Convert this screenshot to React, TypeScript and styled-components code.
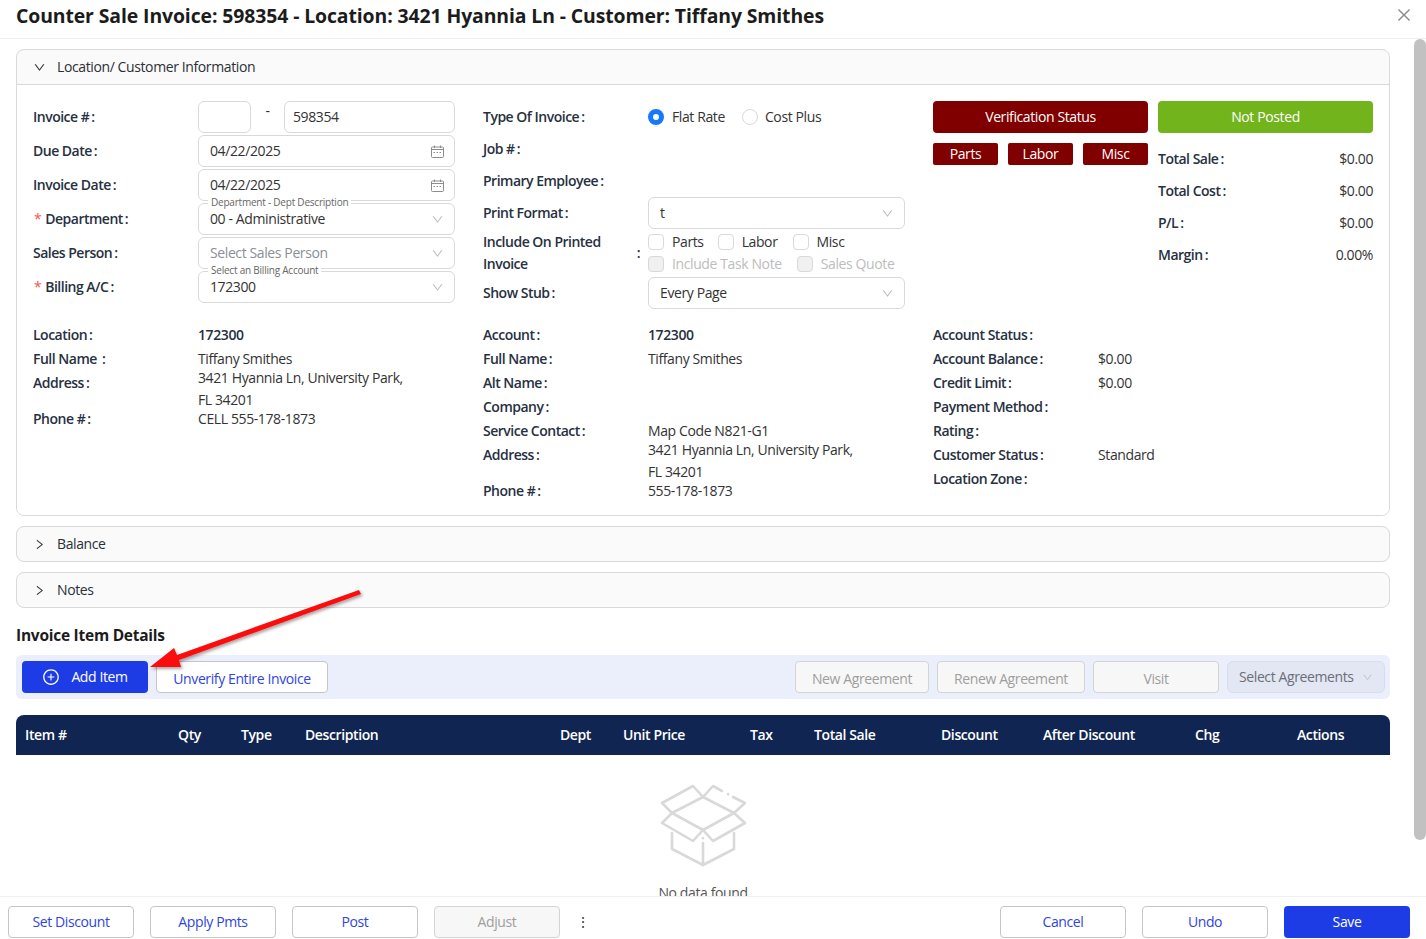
import React from "react";
import styled, { createGlobalStyle } from "styled-components";
import { AiOutlineDown, AiOutlineRight, AiOutlineClose, AiOutlinePlusCircle } from "react-icons/ai";

const Global = createGlobalStyle`
  html, body { margin: 0; padding: 0; height: 100%; overflow: hidden; background: #fff; }
  * { box-sizing: border-box; }
  body { font-family: "Open Sans", "Noto Sans", sans-serif; font-size: 14px; line-height: 22px; color: #2b2f36; }
`;

const Page = styled.div`
  position: relative; width: 1426px; height: 939px; display: flex; flex-direction: column; overflow: hidden; background: #fff;
  letter-spacing: -0.39px;
`;
const Header = styled.header`
  height: 39px; flex: none; border-bottom: 1px solid #f0f0f0; display: flex; align-items: flex-start; justify-content: space-between; padding: 3px 13px 0 16px;
`;
const Title = styled.h1`
  margin: 0; font-size: 19.4px; line-height: 26px; font-weight: 700; color: #1c1c1c; letter-spacing: -0.1px;
`;
const CloseBtn = styled.span`
  color: #8c8c8c; font-size: 18px; line-height: 0; margin-top: 3px;
`;
const Body = styled.main`
  position: relative; flex: 1; min-height: 0; overflow: hidden;
`;
const ScrollThumb = styled.div`
  position: absolute; top: 0; right: 0; width: 12px; height: 801px; border-radius: 6px; background: #c1c1c1;
`;
const Content = styled.div`
  height: 917px; padding: 10px 36px 0 16px; overflow: hidden;
`;
const Card = styled.section`
  border: 1px solid #d9d9d9; border-radius: 8px; background: #fafafa; margin-bottom: 10px; overflow: hidden;
`;
const CardHead = styled.div`
  height: 34px; display: flex; align-items: center; padding-left: 16px; gap: 11px; color: #2b2f36;
  svg { font-size: 13px; color: #333; flex: none; }
`;
const OpenRule = styled.div`
  border-top: 1px solid #d9d9d9;
`;
const CardBody = styled.div`
  background: #fff; padding: 16px 16px 12px;
`;
const TopGrid = styled.div`
  display: grid; grid-template-columns: 422px 422px 440px; column-gap: 28px; margin-bottom: 14px;
`;
const FormCol = styled.div<{ $gap?: number }>`
  display: flex; flex-direction: column; gap: ${(p) => p.$gap ?? 2}px;
`;
const FormRow = styled.div<{ $h?: number; $mt?: number }>`
  display: grid; grid-template-columns: 165px 257px; align-items: center; height: ${(p) => p.$h ?? 32}px; margin-top: ${(p) => p.$mt ?? 0}px;
`;
const Label = styled.span`
  font-weight: 600; color: #27303f; white-space: nowrap; letter-spacing: -0.5px;
  &::after { content: ":"; margin-left: 2px; }
`;
const Star = styled.span`
  color: #ff4d4f; font-weight: 400; margin-right: 4px; margin-left: 1px;
`;
const IncludeLabel = styled.div`
  display: flex; align-items: center; justify-content: space-between; padding-right: 8px; font-weight: 600; color: #27303f; letter-spacing: -0.5px;
`;
const InvoiceInputs = styled.div`
  display: flex; align-items: flex-start;
`;
const Dash = styled.span`
  width: 33px; text-align: center; margin-top: -1px;
`;
const Box = styled.div<{ $w?: number; $pad?: number; $muted?: boolean }>`
  position: relative; height: 32px; ${(p) => (p.$w ? `width: ${p.$w}px;` : "width: 100%;")} border: 1px solid #d9d9d9; border-radius: 6px; background: #fff;
  display: flex; align-items: center; justify-content: space-between; padding: 0 10px 0 ${(p) => p.$pad ?? 11}px;
  color: ${(p) => (p.$muted ? "#8a8f98" : "#333")};
  > svg { flex: none; color: #bfbfbf; font-size: 13px; }
`;
const Legend = styled.span`
  position: absolute; left: 9px; top: -8px; background: #fff; padding: 0 3px; font-size: 10px; line-height: 13px; color: #666; white-space: nowrap; letter-spacing: -0.22px;
`;
const Options = styled.div`
  display: flex; align-items: center; height: 22px;
`;
const OptionStack = styled.div`
  display: flex; flex-direction: column;
`;
const Option = styled.span<{ $off?: boolean; $gap?: number }>`
  display: inline-flex; align-items: center; gap: 8px; margin-right: ${(p) => p.$gap ?? 16}px; color: ${(p) => (p.$off ? "#bdbdbd" : "#333")}; white-space: nowrap;
`;
const Radio = styled.i<{ $on?: boolean }>`
  width: 16px; height: 16px; border-radius: 50%; display: block; flex: none; margin-right: ${(p) => (p.$on ? 0 : -1)}px;
  ${(p) => (p.$on ? "border: 5px solid #1677ff; background: #fff;" : "border: 1px solid #d9d9d9; background: #fff;")}
`;
const Check = styled.i<{ $off?: boolean }>`
  width: 16px; height: 16px; border-radius: 4px; display: block; flex: none; border: 1px solid #d9d9d9; background: ${(p) => (p.$off ? "#f0f0f0" : "#fff")};
`;
const StatusGrid = styled.div`
  display: grid; grid-template-columns: 215px 215px; column-gap: 10px; align-content: start;
`;
const StatusBtn = styled.div<{ $bg: string }>`
  height: 32px; border-radius: 4px; background: ${(p) => p.$bg}; color: #fff; display: flex; align-items: center; justify-content: center;
`;
const MiniRow = styled.div`
  display: flex; gap: 10px; margin-top: 10px;
`;
const Mini = styled.div`
  width: 65px; height: 22px; border-radius: 2px; background: #800000; color: #fff; display: flex; align-items: center; justify-content: center;
`;
const Totals = styled.div`
  margin-top: 10px;
`;
const TotalRow = styled.div`
  height: 32px; display: flex; align-items: center; justify-content: space-between; color: #333;
`;
const InfoGrid = styled.div`
  display: grid; grid-template-columns: 422px 422px 440px; column-gap: 28px;
`;
const InfoRow = styled.div<{ $tall?: boolean }>`
  display: grid; grid-template-columns: 165px 257px; height: ${(p) => (p.$tall ? 36 : 24)}px; line-height: 24px; color: #333;
`;
const InfoValue = styled.span<{ $bold?: boolean }>`
  font-weight: ${(p) => (p.$bold ? 600 : 400)}; color: ${(p) => (p.$bold ? "#27303f" : "#333")};
`;
const MultiValue = styled.span`
  line-height: 22px; margin-top: -4px; display: block;
`;
const SectionTitle = styled.h2`
  margin: 17px 0 10px; font-size: 15.5px; line-height: 20px; font-weight: 700; color: #1c1c1c; letter-spacing: -0.25px;
`;
const Toolbar = styled.div`
  height: 44px; border-radius: 6px; background: #ebeefb; display: flex; align-items: center; padding: 0 5px 0 6px; margin-bottom: 16px;
`;
const PrimaryBtn = styled.button<{ $w: number }>`
  width: ${(p) => p.$w}px; height: 32px; border: 0; border-radius: 4px; background: #1d3ce6; color: #fff; font: inherit; letter-spacing: inherit; padding: 0; flex: none;
  display: inline-flex; align-items: center; justify-content: center; gap: 11px;
  svg { font-size: 18px; }
`;
const OutlineBtn = styled.button<{ $w: number; $off?: boolean }>`
  width: ${(p) => p.$w}px; height: 32px; border: 1px solid ${(p) => (p.$off ? "#d4d4d4" : "#c6c6c6")}; border-radius: 4px; flex: none; padding: 0;
  background: ${(p) => (p.$off ? "#f7f7f7" : "#fff")}; color: ${(p) => (p.$off ? "#9e9e9e" : "#2f45e0")}; font: inherit; letter-spacing: inherit; line-height: 30px;
`;
const ToolBtn = styled(OutlineBtn)`
  padding-top: 2px;
`;
const ToolLeft = styled.div`
  display: flex; gap: 8px;
`;
const ToolRight = styled.div`
  display: flex; gap: 8px; margin-left: auto;
`;
const AgreementSelect = styled.div`
  width: 158px; height: 32px; border: 1px solid #d9dcec; border-radius: 6px; background: #e3e6f3; color: #6b6f78; display: flex; align-items: center; justify-content: space-between; padding: 0 11px;
  svg { font-size: 11px; color: #bfc3d2; flex: none; }
`;
const TableHead = styled.div`
  height: 40px; border-radius: 8px 8px 0 0; background: #102552; color: #fff; font-weight: 600; display: grid; align-items: center; padding-left: 9px;
  grid-template-columns: 153px 63px 64px 255px 63px 127px 64px 127px 102px 152px 102px 1fr;
`;
const Empty = styled.div`
  display: flex; flex-direction: column; align-items: center; padding-top: 25px; color: #555; line-height: 20px;
  svg { display: block; margin-bottom: 13px; }
`;
const Footer = styled.footer`
  height: 43px; flex: none; background: #fff; border-top: 1px solid #f0f0f0; display: flex; align-items: flex-start; padding: 9px 16px 0 8px; gap: 16px;
`;
const Dots = styled.span`
  width: 14px; text-align: center; line-height: 32px; color: #333;
`;
const Spacer = styled.div`
  flex: 1;
`;
const ArrowLayer = styled.svg`
  position: absolute; left: 140px; top: 580px; pointer-events: none; overflow: visible;
`;

const Calendar = () => (
  <svg width="13" height="13" viewBox="0 0 13 13" fill="none" stroke="#8c8c8c" strokeWidth="1">
    <rect x="0.5" y="2" width="12" height="10.5" rx="1" />
    <path d="M3.5 0.5V3M9.5 0.5V3M0.5 4.5H12.5" />
    <path d="M2.5 7.5H4.5M5.5 7.5H7.5M8.5 7.5H10.5" strokeDasharray="1.5 0.5" />
  </svg>
);

type Info = [string, React.ReactNode, boolean?];

const infoA: Info[] = [
  ["Location", <InfoValue $bold>172300</InfoValue>],
  ["Full Name ", <InfoValue>Tiffany Smithes</InfoValue>],
  ["Address", <MultiValue>3421 Hyannia Ln, University Park,<br />FL 34201</MultiValue>, true],
  ["Phone #", <InfoValue>CELL 555-178-1873</InfoValue>],
];
const infoB: Info[] = [
  ["Account", <InfoValue $bold>172300</InfoValue>],
  ["Full Name", <InfoValue>Tiffany Smithes</InfoValue>],
  ["Alt Name", null],
  ["Company", null],
  ["Service Contact", <InfoValue>Map Code N821-G1</InfoValue>],
  ["Address", <MultiValue>3421 Hyannia Ln, University Park,<br />FL 34201</MultiValue>, true],
  ["Phone #", <InfoValue>555-178-1873</InfoValue>],
];
const infoC: Info[] = [
  ["Account Status", null],
  ["Account Balance", <InfoValue>$0.00</InfoValue>],
  ["Credit Limit", <InfoValue>$0.00</InfoValue>],
  ["Payment Method", null],
  ["Rating", null],
  ["Customer Status", <InfoValue>Standard</InfoValue>],
  ["Location Zone", null],
];
const totals = [["Total Sale", "$0.00"], ["Total Cost", "$0.00"], ["P/L", "$0.00"], ["Margin", "0.00%"]];
const columns = ["Item #", "Qty", "Type", "Description", "Dept", "Unit Price", "Tax", "Total Sale", "Discount", "After Discount", "Chg", "Actions"];

const InfoColumn = ({ rows }: { rows: Info[] }) => (
  <div>
    {rows.map(([k, v, tall]) => (
      <InfoRow key={k} $tall={tall}>
        <Label>{k}</Label>
        {v}
      </InfoRow>
    ))}
  </div>
);

export default function App() {
  return (
    <Page>
      <Global />
      <Header>
        <Title>Counter Sale Invoice: 598354 - Location: 3421 Hyannia Ln - Customer: Tiffany Smithes</Title>
        <CloseBtn><AiOutlineClose /></CloseBtn>
      </Header>
      <Body>
        <ScrollThumb />
        <Content>
          <Card>
            <CardHead><AiOutlineDown />Location/ Customer Information</CardHead>
            <OpenRule />
            <CardBody>
              <TopGrid>
                <FormCol>
                  <FormRow>
                    <Label>Invoice #</Label>
                    <InvoiceInputs>
                      <Box $w={53} />
                      <Dash>-</Dash>
                      <Box $w={171} $pad={8}>598354</Box>
                    </InvoiceInputs>
                  </FormRow>
                  <FormRow><Label>Due Date</Label><Box>04/22/2025<Calendar /></Box></FormRow>
                  <FormRow><Label>Invoice Date</Label><Box>04/22/2025<Calendar /></Box></FormRow>
                  <FormRow>
                    <Label><Star>*</Star>Department</Label>
                    <Box><Legend>Department - Dept Description</Legend>00 - Administrative<AiOutlineDown /></Box>
                  </FormRow>
                  <FormRow><Label>Sales Person</Label><Box $muted>Select Sales Person<AiOutlineDown /></Box></FormRow>
                  <FormRow>
                    <Label><Star>*</Star>Billing A/C</Label>
                    <Box><Legend>Select an Billing Account</Legend>172300<AiOutlineDown /></Box>
                  </FormRow>
                </FormCol>
                <FormCol $gap={0}>
                  <FormRow>
                    <Label>Type Of Invoice</Label>
                    <Options>
                      <Option $gap={17}><Radio $on />Flat Rate</Option>
                      <Option><Radio />Cost Plus</Option>
                    </Options>
                  </FormRow>
                  <FormRow><Label>Job #</Label></FormRow>
                  <FormRow><Label>Primary Employee</Label></FormRow>
                  <FormRow><Label>Print Format</Label><Box>t<AiOutlineDown /></Box></FormRow>
                  <FormRow $h={44} $mt={2}>
                    <IncludeLabel><span>Include On Printed<br />Invoice</span><span>:</span></IncludeLabel>
                    <OptionStack>
                      <Options>
                        <Option $gap={14}><Check />Parts</Option>
                        <Option $gap={15}><Check />Labor</Option>
                        <Option><Check />Misc</Option>
                      </Options>
                      <Options>
                        <Option $off $gap={15}><Check $off />Include Task Note</Option>
                        <Option $off><Check $off />Sales Quote</Option>
                      </Options>
                    </OptionStack>
                  </FormRow>
                  <FormRow $mt={2}><Label>Show Stub</Label><Box>Every Page<AiOutlineDown /></Box></FormRow>
                </FormCol>
                <StatusGrid>
                  <div>
                    <StatusBtn $bg="#800000">Verification Status</StatusBtn>
                    <MiniRow><Mini>Parts</Mini><Mini>Labor</Mini><Mini>Misc</Mini></MiniRow>
                  </div>
                  <div>
                    <StatusBtn $bg="#72b41b">Not Posted</StatusBtn>
                    <Totals>
                      {totals.map(([k, v]) => (
                        <TotalRow key={k}><Label>{k}</Label><span>{v}</span></TotalRow>
                      ))}
                    </Totals>
                  </div>
                </StatusGrid>
              </TopGrid>
              <InfoGrid>
                <InfoColumn rows={infoA} />
                <InfoColumn rows={infoB} />
                <InfoColumn rows={infoC} />
              </InfoGrid>
            </CardBody>
          </Card>
          <Card><CardHead><AiOutlineRight />Balance</CardHead></Card>
          <Card><CardHead><AiOutlineRight />Notes</CardHead></Card>
          <SectionTitle>Invoice Item Details</SectionTitle>
          <Toolbar>
            <ToolLeft>
              <PrimaryBtn $w={126}><AiOutlinePlusCircle />Add Item</PrimaryBtn>
              <ToolBtn $w={172}>Unverify Entire Invoice</ToolBtn>
            </ToolLeft>
            <ToolRight>
              <ToolBtn $off $w={134}>New Agreement</ToolBtn>
              <ToolBtn $off $w={148}>Renew Agreement</ToolBtn>
              <ToolBtn $off $w={126}>Visit</ToolBtn>
              <AgreementSelect>Select Agreements<AiOutlineDown /></AgreementSelect>
            </ToolRight>
          </Toolbar>
          <TableHead>{columns.map((c) => <span key={c}>{c}</span>)}</TableHead>
          <Empty>
            <svg width="94" height="90" viewBox="36 10 94 90" fill="none" stroke="#d9d9d9" strokeWidth="2.6" strokeLinejoin="round" strokeLinecap="round">
              <path d="M83 27L52 43L83 60L114 43L83 27Z" />
              <path d="M52 43L42 33L73 16L83 27L93 16L102 21" />
              <path d="M113 27L125 33L114 43" />
              <path d="M108 24L108.2 24.1" />
              <path d="M52 43L42 53L73 71L83 60L93 71L125 53L114 43" />
              <path d="M52 63V79L83 95L114 79V63" />
              <path d="M83 73V95M83 68V68.2" />
            </svg>
            No data found
          </Empty>
        </Content>
      </Body>
      <Footer>
        <OutlineBtn $w={126}>Set Discount</OutlineBtn>
        <OutlineBtn $w={126}>Apply Pmts</OutlineBtn>
        <OutlineBtn $w={126}>Post</OutlineBtn>
        <OutlineBtn $off $w={126}>Adjust</OutlineBtn>
        <Dots>⋮</Dots>
        <Spacer />
        <OutlineBtn $w={126}>Cancel</OutlineBtn>
        <OutlineBtn $w={126}>Undo</OutlineBtn>
        <PrimaryBtn $w={126}>Save</PrimaryBtn>
      </Footer>
      <ArrowLayer width="240" height="100" viewBox="0 0 240 100">
        <defs>
          <filter id="arrowShadow" x="-10%" y="-20%" width="120%" height="150%">
            <feDropShadow dx="1.5" dy="2" stdDeviation="1.5" floodColor="#000" floodOpacity="0.35" />
          </filter>
        </defs>
        <path d="M219 10L221 14L39 80L41 87L10 87L34 68L37 75Z" fill="#fb0a0a" filter="url(#arrowShadow)" />
      </ArrowLayer>
    </Page>
  );
}
